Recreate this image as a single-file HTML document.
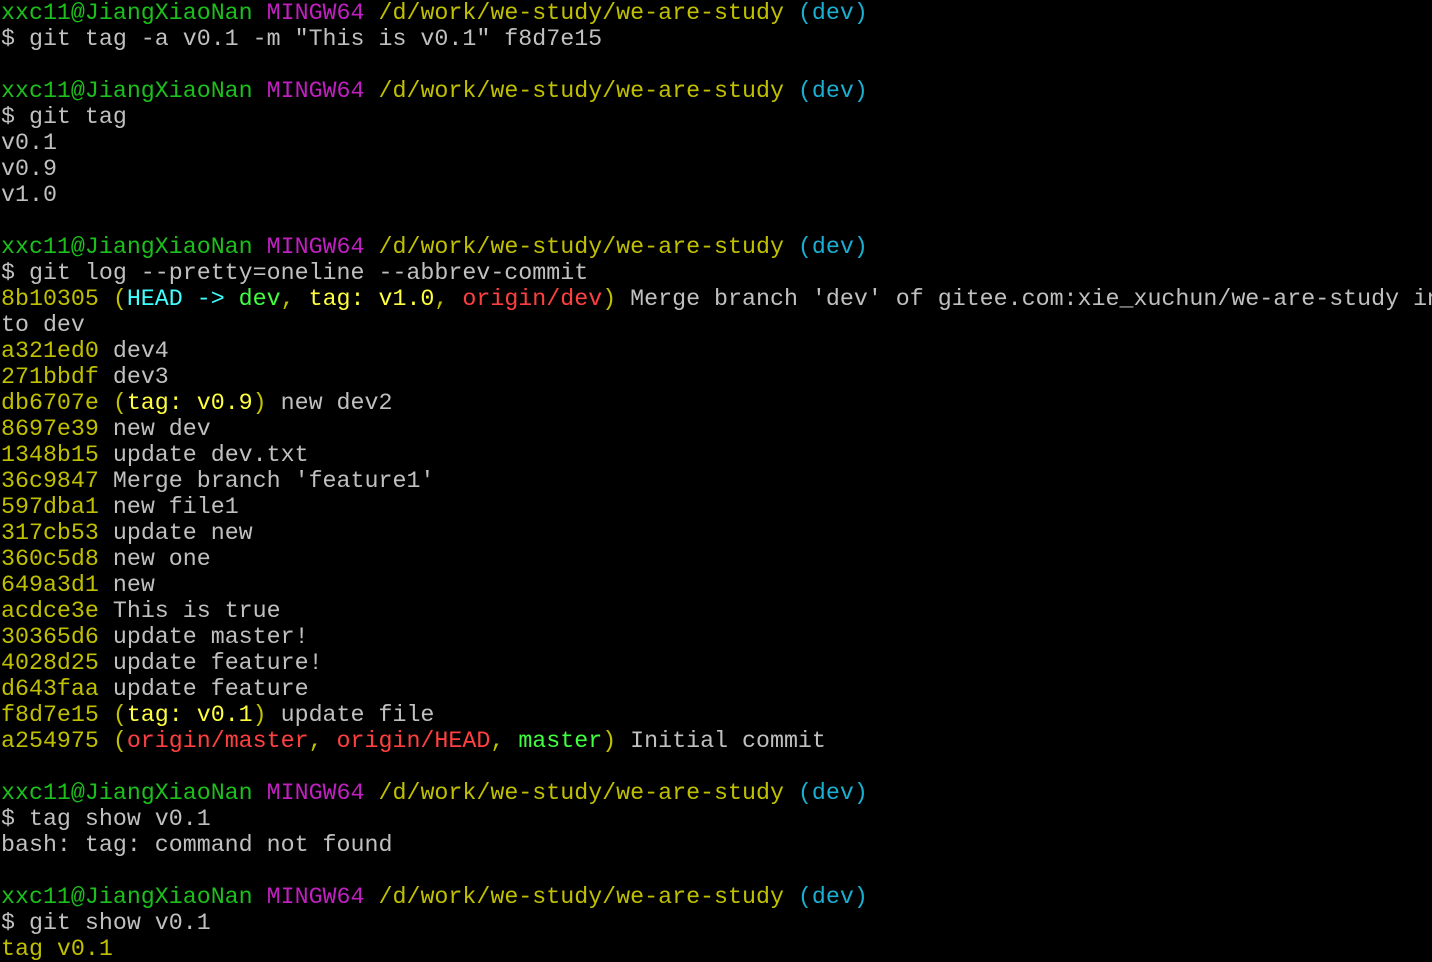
<!DOCTYPE html><html><head><style>
body{margin:0;background:#000;width:1432px;height:962px;overflow:hidden}
pre{margin:0;padding:0 0 0 1px;font-family:"Liberation Mono",monospace;font-size:23.3px;line-height:26px;color:#c0c0c0;white-space:pre}
.g{color:#1cc01c}.m{color:#c020c0}.y{color:#c0c000}.c{color:#1aaed0}
.Y{color:#ffff40}.C{color:#40ffff}.G{color:#40ff40}.R{color:#ff4040}
</style></head><body><pre><span class="g">xxc11@JiangXiaoNan</span> <span class="m">MINGW64</span> <span class="y">/d/work/we-study/we-are-study</span> <span class="c">(dev)</span>
$ git tag -a v0.1 -m "This is v0.1" f8d7e15

<span class="g">xxc11@JiangXiaoNan</span> <span class="m">MINGW64</span> <span class="y">/d/work/we-study/we-are-study</span> <span class="c">(dev)</span>
$ git tag
v0.1
v0.9
v1.0

<span class="g">xxc11@JiangXiaoNan</span> <span class="m">MINGW64</span> <span class="y">/d/work/we-study/we-are-study</span> <span class="c">(dev)</span>
$ git log --pretty=oneline --abbrev-commit
<span class="y">8b10305 (</span><span class="C">HEAD -&gt; </span><span class="G">dev</span><span class="y">, </span><span class="Y">tag: v1.0</span><span class="y">, </span><span class="R">origin/dev</span><span class="y">)</span> Merge branch 'dev' of gitee.com:xie_xuchun/we-are-study in
to dev
<span class="y">a321ed0</span> dev4
<span class="y">271bbdf</span> dev3
<span class="y">db6707e (</span><span class="Y">tag: v0.9</span><span class="y">)</span> new dev2
<span class="y">8697e39</span> new dev
<span class="y">1348b15</span> update dev.txt
<span class="y">36c9847</span> Merge branch 'feature1'
<span class="y">597dba1</span> new file1
<span class="y">317cb53</span> update new
<span class="y">360c5d8</span> new one
<span class="y">649a3d1</span> new
<span class="y">acdce3e</span> This is true
<span class="y">30365d6</span> update master!
<span class="y">4028d25</span> update feature!
<span class="y">d643faa</span> update feature
<span class="y">f8d7e15 (</span><span class="Y">tag: v0.1</span><span class="y">)</span> update file
<span class="y">a254975 (</span><span class="R">origin/master</span><span class="y">, </span><span class="R">origin/HEAD</span><span class="y">, </span><span class="G">master</span><span class="y">)</span> Initial commit

<span class="g">xxc11@JiangXiaoNan</span> <span class="m">MINGW64</span> <span class="y">/d/work/we-study/we-are-study</span> <span class="c">(dev)</span>
$ tag show v0.1
bash: tag: command not found

<span class="g">xxc11@JiangXiaoNan</span> <span class="m">MINGW64</span> <span class="y">/d/work/we-study/we-are-study</span> <span class="c">(dev)</span>
$ git show v0.1
<span class="y">tag v0.1</span>
</pre></body></html>
